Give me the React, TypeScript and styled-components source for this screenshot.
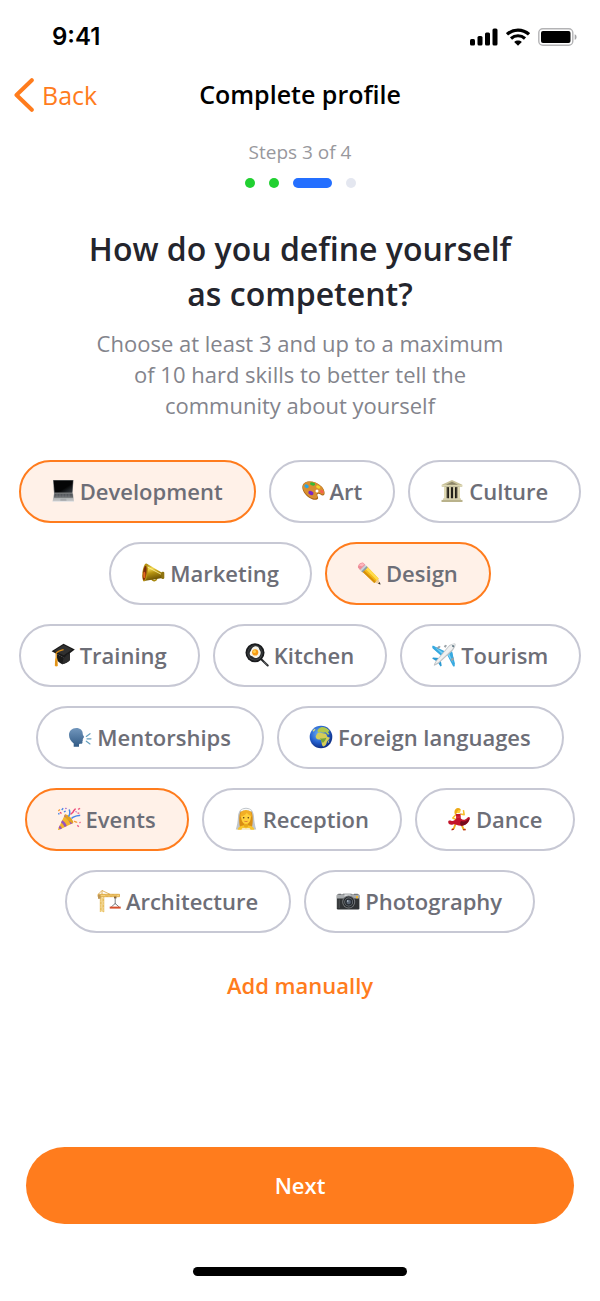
import React, { useState } from "react";
import styled, { createGlobalStyle } from "styled-components";

const GlobalStyle = createGlobalStyle`
  *, *::before, *::after { box-sizing: border-box; }
  body { margin: 0; background: #ffffff; }
  button { font-family: inherit; cursor: pointer; }
`;

const accent = "#ff7c1d";

const Screen = styled.div`
  display: flex;
  flex-direction: column;
  min-height: 100vh;
  background: #ffffff;
  font-family: "Open Sans", "Noto Sans", sans-serif;
`;

const StatusBar = styled.div`
  display: flex;
  align-items: center;
  justify-content: space-between;
  height: 74px;
  padding: 0 22px 0 52px;
`;

const Clock = styled.time`
  font-family: Inter, sans-serif;
  font-size: 24px;
  line-height: 32px;
  font-weight: 600;
  color: #000000;
`;

const StatusIcons = styled.div`
  display: flex;
  align-items: center;
  gap: 8px;
`;

const NavBar = styled.header`
  display: grid;
  grid-template-columns: 1fr auto 1fr;
  align-items: center;
  height: 42px;
  padding: 0 14px;
`;

const BackButton = styled.button`
  display: flex;
  align-items: center;
  justify-self: start;
  gap: 8px;
  padding: 0;
  border: 0;
  background: none;
  color: ${accent};
  font-size: 25px;
  line-height: 32px;
`;

const NavTitle = styled.h1`
  margin: 0;
  padding-bottom: 3px;
  font-size: 25px;
  line-height: 32px;
  font-weight: 600;
  color: #000000;
`;

const Content = styled.main`
  display: flex;
  flex: 1;
  flex-direction: column;
  align-items: center;
  padding: 22px 16px 0;
  text-align: center;
`;

const StepLabel = styled.p`
  margin: 0;
  font-size: 19px;
  line-height: 28px;
  color: #98989d;
`;

const StepDots = styled.div`
  display: flex;
  gap: 14px;
  margin-top: 12px;
`;

type StepState = "done" | "current" | "todo";
const stepColor = { done: "#21d031", current: "#246fff", todo: "#e4e7f0" };

const StepDot = styled.span<{ $state: StepState }>`
  width: ${(p) => (p.$state === "current" ? 39 : 10)}px;
  height: 10px;
  border-radius: 5px;
  background: ${(p) => stepColor[p.$state]};
`;

const Question = styled.h2`
  max-width: 440px;
  margin: 38px 0 0;
  font-size: 32px;
  line-height: 45px;
  font-weight: 600;
  color: #24252d;
`;

const Hint = styled.p`
  max-width: 424px;
  margin: 12px 0 0;
  font-size: 22px;
  line-height: 31px;
  color: #83848c;
`;

const Skills = styled.div`
  display: flex;
  flex-wrap: wrap;
  justify-content: center;
  gap: 19px 13px;
  margin-top: 39px;
`;

const Chip = styled.button<{ $selected: boolean }>`
  display: flex;
  align-items: center;
  gap: 5px;
  height: 63px;
  padding: 0 31px 2px 30px;
  border: 2px solid ${(p) => (p.$selected ? accent : "#c7c8d4")};
  border-radius: 32px;
  background: ${(p) => (p.$selected ? "#fff1e8" : "#ffffff")};
  color: #6d6e77;
  font-size: 22px;
  line-height: 32px;
  font-weight: 600;
`;

const Glyph = styled.svg`
  display: block;
  flex: none;
  width: 24px;
  height: 24px;
`;

const AddButton = styled.button`
  margin-top: 36px;
  padding: 0;
  border: 0;
  background: none;
  color: ${accent};
  font-size: 22px;
  line-height: 32px;
  font-weight: 600;
`;

const Footer = styled.footer`
  display: flex;
  flex-direction: column;
  align-items: center;
  gap: 43px;
  padding: 0 26px 25px;
`;

const NextButton = styled.button`
  width: 100%;
  height: 77px;
  padding: 0 0 2px;
  border: 0;
  border-radius: 39px;
  background: ${accent};
  color: #ffffff;
  font-size: 22px;
  line-height: 32px;
  font-weight: 600;
`;

const HomeIndicator = styled.div`
  width: 214px;
  height: 9px;
  border-radius: 5px;
  background: #000000;
`;

const drawings: Record<string, React.ReactNode> = {
  laptop: (
    <>
      <defs>
        <linearGradient id="lapScreen" x1="0" y1="0" x2="1" y2="1">
          <stop offset=".6" stopColor="#050506" />
          <stop offset="1" stopColor="#3c4248" />
        </linearGradient>
        <linearGradient id="lapBase" x1="0" y1="0" x2="0" y2="1">
          <stop offset="0" stopColor="#8d8f91" />
          <stop offset="1" stopColor="#c9cbcc" />
        </linearGradient>
      </defs>
      <path d="M2 1h20.500l-1 14H3z" fill="#77797b" />
      <path d="M2.600 1.500h19.300l-.8 12H3.600z" fill="url(#lapScreen)" />
      <path d="M3 14.500h19l1 7.800H1.600z" fill="url(#lapBase)" />
      <path d="M3.600 14.800h17.800l.7 3.600H3z" fill="#4b4e51" />
      <path d="M3.600 16.100h18M3.300 17.500h18.500M6 15v3.400M9 15v3.400M12 15v3.400M15 15v3.400M18 15v3.400" stroke="#8d9194" strokeWidth=".4" />
      <path d="M9.600 19.400h5.600l.3 2.400H9.300z" fill="#a7a9ab" />
      <path d="M1.600 22.200H23v.8H1.700z" fill="#e2e3e4" />
    </>
  ),
  palette: (
    <>
      <path d="M3.500 4C8 1 16 3 20.600 7.500c3.400 3.400 4 8.700 1.300 8.900-2 .1-3.700-2.600-5.200-1.300-1.500 1.200 1.800 3.800-.3 5.100C13 22.300 6.500 18.800 3 13.500.6 9.700.8 5.800 3.500 4z" fill="#a96514" />
      <path d="M3.900 3.700C8 1.300 15.800 3 20.200 7.400c3.300 3.300 3.700 7.900 1.600 8-2 .1-3.900-2.700-5.600-1.200-1.700 1.400 1.400 3.800-.4 4.900C12.700 21 6.700 17.700 3.500 12.800 1.200 9.300 1.500 5.200 3.900 3.700z" fill="#d98f30" />
      <ellipse cx="11.600" cy="5" rx="2.600" ry="1.600" fill="#35bb37" transform="rotate(12 11.600 5)" />
      <ellipse cx="5.600" cy="7.200" rx="2.300" ry="1.700" fill="#27a7e8" transform="rotate(30 5.600 7.200)" />
      <ellipse cx="17.200" cy="8" rx="2.200" ry="1.500" fill="#f4d429" transform="rotate(25 17.200 8)" />
      <ellipse cx="9.900" cy="14" rx="2.700" ry="2" fill="#7a28c2" transform="rotate(25 9.900 14)" />
      <ellipse cx="20.900" cy="12.700" rx="2" ry="1.500" fill="#f36150" transform="rotate(45 20.900 12.700)" />
      <circle cx="16" cy="12" r="1.500" fill="#fff" />
    </>
  ),
  museum: (
    <>
      <path d="M4.500 7.500h15v12h-15z" fill="#625c48" />
      <path d="M7.500 8.500h2v11h-2zM11 8.500h2v11h-2zM14.500 8.500h2v11h-2z" fill="#211f19" />
      <path d="M12 1 1.700 5.800v1.900h20.600V5.800z" fill="#c9c29a" />
      <path d="m12 2.800-6 2.900h12z" fill="#8e876a" />
      <path d="M4 8h2.500v12H4zM9.100 8h1.700v12H9.100zM13.200 8h1.700v12h-1.700zM17.500 8H20v12h-2.500z" fill="#e0dab4" />
      <path d="M3 19.400h18v1.500H3z" fill="#d5cea8" />
      <path d="M1.500 20.900h21V23h-21z" fill="#b9b28b" />
      <path d="M1.700 6.600h20.600" stroke="#eee8c6" strokeWidth=".6" />
    </>
  ),
  horn: (
    <>
      <defs>
        <linearGradient id="hornGold" x1="0" y1="0" x2=".25" y2="1">
          <stop offset="0" stopColor="#8f7208" />
          <stop offset=".35" stopColor="#f3d84d" />
          <stop offset=".6" stopColor="#b59210" />
          <stop offset="1" stopColor="#6b5203" />
        </linearGradient>
      </defs>
      <path d="M10.500 16.500c.4 3.700 4.700 4.400 5.200.5" fill="none" stroke="#a8880e" strokeWidth="1.600" />
      <path d="M5.500 2.600 21.500 12v5L3 20z" fill="url(#hornGold)" />
      <ellipse cx="4.100" cy="11.500" rx="2.700" ry="9" fill="#b8920f" transform="rotate(7 4.100 11.500)" />
      <ellipse cx="3.700" cy="12" rx="1.700" ry="7.300" fill="#7d2d0b" transform="rotate(7 3.700 12)" />
      <ellipse cx="3.300" cy="14" rx="1.100" ry="3.300" fill="#e2691d" />
      <rect x="20.300" y="10.700" width="3" height="7.300" rx="1.300" fill="#8f7411" />
      <path d="m6.500 6 13.500 7.200" stroke="#fff2a0" strokeWidth=".8" />
    </>
  ),
  pencil: (
    <>
      <path d="m17.600 21.600 5.700 1.800-2-5.600z" fill="#f0cd9c" />
      <path d="m21 22.700 2.600.9-.9-2.600z" fill="#2d2d2f" />
      <path d="M4.700 9.900 9.800 5.200 21.600 17.500l-4.300 4.400z" fill="#f5b916" />
      <path d="m9.800 5.200 11.800 12.300-1.700 1.800L7.800 7.200z" fill="#ffdc4e" />
      <path d="m4.900 10.300 1.500-1.600L18.800 20.400l-1.500 1.500z" fill="#d68f0c" />
      <path d="M4 10.100 9.200 4.800l1.500 1.600-5.200 5.200z" fill="#899ba8" />
      <path d="M2.600 8.800 7.900 3.500l1.700 1.700-5.300 5.300z" fill="#c8d3da" />
      <path d="M1 6.500C.3 4.400 3.900.7 6.200 1.700l2.100 2.100L3 9.100z" fill="#ee8d98" />
      <path d="M2 4.400C3.400 2.200 5.200 1.700 6.300 2.500l1 1-2.100 1.900z" fill="#ffb5bd" />
    </>
  ),
  cap: (
    <>
      <path d="m6 11 6.600 3.500 6.400-4.500v7c-2.200 2.700-6 4-7.800 4.200C8.800 20 7 18.800 6 17z" fill="#1a1a1a" />
      <path d="m12.600 14.500 6.400-4.500v7c-2.200 2.700-6 4-7.800 4.200z" fill="#2c2c2c" />
      <path d="M.6 8.200 12.500.8l11.300 5.700-10.900 8.200z" fill="#191919" />
      <path d="m3 8 9.600-6 8.600 4.500-8.500 5.800z" fill="#303030" />
      <path d="M12.600 6.600C9 7.500 6.300 8.600 5.200 10.200v7" fill="none" stroke="#d88b15" strokeWidth="1.300" />
      <path d="M4.200 15.500h2.200l.4 7.500c-1 .6-2.200.5-3 0z" fill="#f2a422" />
      <path d="M4.700 17.500v5M5.800 17.500v5" stroke="#bb710b" strokeWidth=".4" />
    </>
  ),
  pan: (
    <>
      <path d="m16.500 16.500 6.200 6" stroke="#25272a" strokeWidth="2" strokeLinecap="round" />
      <path d="m18.700 18.500 3.600 3.500" stroke="#85888a" strokeWidth=".7" />
      <circle cx="10" cy="9.800" r="9.500" fill="#191b1d" />
      <circle cx="10" cy="9.800" r="7.600" fill="#4a4d4f" />
      <circle cx="10" cy="9.800" r="7" fill="#292c2e" />
      <path d="M8 4.200c2.600-1.700 5.800-.7 6.300 2 .3 1.500 1.600 1.600 1.400 3.600-.2 2.600-1.900 5.300-5 5.300-2.100 0-2.400-1.300-4.100-2-2.300-1-2.300-3.300-1.100-4.800.8-1.100 1-3 2.500-4.100z" fill="#f6f4ea" />
      <circle cx="10.200" cy="9.400" r="3.100" fill="#f69b14" />
      <circle cx="9.500" cy="8.500" r="1.500" fill="#ffd04b" />
    </>
  ),
  plane: (
    <>
      <path d="m12.500 9-12-6.200L.4 4.600l8.600 8zM15 11.500l6.200 12 1.700-.3-3-14.700z" fill="#37a9e0" />
      <path d="M12.800 8.300.8 2.500l-.3 2.700 8.700 7.500zM15.500 11l6.200 11.700 1.200-2L20 8z" fill="#37a9e0" />
      <path d="m2.500 4 8.500 5.200-1.200 1.500zM21.500 20.500 17.200 10.500l-1.500 1.200z" fill="#78d0f5" />
      <path d="m7 15-6-.6-.8 1.200 4.700 3zM8.700 17l1 5.700-1.200.9L5.600 19z" fill="#299ad3" />
      <path d="m4.800 4.800 2.200-2.100 1.700 1-2.100 2.400zM19.600 18.200l2.600-2-.8-1.900-2.600 1.900zM11.800 3.700l1.200-1.900 2 .8-1.400 2.100z" fill="#9ba3a8" />
      <path d="M23.300.8c.9 1.500-1 5-2.700 6.900L7.800 19.500c-1.500 1.300-5 3.500-5.900 3.100-.5-.9 1.700-4.400 3.100-6L16.300 3.200C18.200 1.400 22 0 23.300.8z" fill="#bfc3c6" />
      <path d="M22.700 1.100c-1.400-.3-4.200 1.100-5.800 2.700L6 16.400c-1 1.200-2.400 3.300-3 4.600 1.600-.5 3.300-1.700 4.500-2.800L20 6.400c1.500-1.600 3-4.100 2.700-5.300z" fill="#f0f1f1" />
      <path d="m19.700 2.800 1.600 1.700.8-1.500-1-1z" fill="#486373" />
    </>
  ),
  speaking: (
    <>
      <defs>
        <linearGradient id="headBlue" x1="0" y1="0" x2="0" y2="1">
          <stop offset="0" stopColor="#7297bd" />
          <stop offset="1" stopColor="#315a85" />
        </linearGradient>
      </defs>
      <path d="M8.300 3c4 0 6.400 2.500 6.400 5.400 0 1 .3 1.500 1.200 3 .4.700.2 1.100-.5 1.400l-.4.200.3 1.100-.8.700.4.800-.5.700c.4 2-.2 2.500-1.800 2.500-1.200 0-1.600.3-1.600 1.200v1.700H5.700v-3.200C3 16.300 1 13.600 1 10.100 1 5.900 4 3 8.300 3z" fill="url(#headBlue)" />
      <path d="m18.300 11.400 3.700-2.700M19 13.800h4M18.300 16.200l3.700 2.700" stroke="#66a0bf" strokeWidth="1.200" strokeLinecap="round" />
    </>
  ),
  globe: (
    <>
      <defs>
        <radialGradient id="ocean" cx=".4" cy=".35" r=".65">
          <stop offset="0" stopColor="#6fb2f3" />
          <stop offset=".6" stopColor="#235fcd" />
          <stop offset="1" stopColor="#0f2f85" />
        </radialGradient>
      </defs>
      <circle cx="12" cy="12" r="11.300" fill="url(#ocean)" />
      <path d="M9 4.400c1.200-1.400 2.900-2.400 4-2.500 3 0 5.700 1.300 7.700 4l-1.800 1 1.600 2.200-1.500.6-2.400-2.400-2.900.5-2-1-2.300 1-1-1.800z" fill="#b3c84b" />
      <path d="M8.200 8.500c1.700-1.300 3.900-1.300 5.400-.3l3.400.6 1.500 3.300 2.300.4c-.1 2-2.800 3.300-3.100 5-.3 2-1.700 3.900-3.200 3.900-1.600-.2-1.700-2.900-2-4.900-.2-1.700-1-2.200-2.800-2.100-2 0-3.100-1.500-3-3.200z" fill="#d5cd58" />
      <path d="M11 13.200c2 .5 4.200.3 6.400-.4-.5 2-1.700 3-2.700 4.400-.8.800-2 .3-2.300-.7-.4-1-.5-1.900-1.400-3.300z" fill="#74a43b" />
      <path d="m19.400 15.700.9-.4-.7 2.400-.8.200zM3.500 5.700l2.200-2 .8 1-2 2z" fill="#d6d980" />
    </>
  ),
  party: (
    <>
      <path d="M8 7.500c4 1.500 7 5 8.200 8.600L1.900 22.900c-.8.200-1.100-.3-.8-1z" fill="#f4b52c" />
      <path d="M5.200 13.300c2 1 3.700 3 4.600 5.800l-2.300 1c-.8-2.200-2.100-3.800-3.500-4.500zM2.600 18.600c1.200.7 2 1.700 2.400 2.800l-2 .9c-.4-.7-.8-1.100-1.400-1.400zM7 9.300c3 1.700 5.300 4.400 6.500 8l2.500-1.200C14.300 12.200 12 9 8.100 7.400z" fill="#9653bd" />
      <path d="M7.800 7.600c1.600-.6 4.500 1.200 6.400 3.700 1.800 2.400 2.600 4.200 1.900 4.800-1.200.6-3.700-1.400-5.500-3.500-1.900-2.200-3.300-4.400-2.800-5z" fill="#e2a221" />
      <path d="M11.500 9.500c1.800-2.200 1.500-4.800.7-7M14.500 11.500c2.500-2.800 5-2.800 8.700-3.200" fill="none" stroke="#4988e9" strokeWidth="1.500" />
      <path d="M14 7.500c.3-2 1.900-1.400 2.300-3s1.900-1.200 2-3M4.500 6.500 3 5.200" fill="none" stroke="#ed4675" strokeWidth="1.400" />
      <path d="M17 14.500c1.400-.5 1.800 1 3.200.6M3 2.500 1.300 4" fill="none" stroke="#f59b37" strokeWidth="1.400" />
      <path d="M6.200 1.300 4.700 3M8.700 4.200l-1.800.7M1.200 7l1.300-.5" stroke="#4988e9" strokeWidth="1.400" />
      <path d="m21 2.300 2.100-.9M20.500 5.800l1.800.6M20.300 18.300l1.500 1.500M22.600 15l.8 1" stroke="#ee5f85" strokeWidth="1.400" />
      <path d="m8.500 1 .9.900M18.700 5.100l.8-.7" stroke="#9b4ec4" strokeWidth="1.300" />
    </>
  ),
  bride: (
    <>
      <path d="M12 .8c5.300 0 7.700 3.800 8 9 .2 4.500 1 9 2.200 12.700H1.800C3 18.800 3.800 14.300 4 9.800c.3-5.200 2.700-9 8-9z" fill="#bfc5ca" />
      <path d="M6 20c-1.200-5-1.200-14 1.300-16.300C9 2 15 2 16.700 3.700 19.200 6 19.200 15 18 20z" fill="#d98e13" />
      <path d="M3.600 22.800c.5-3.200 4-4.200 6.200-4.600h4.400c2.200.4 5.700 1.400 6.200 4.600z" fill="#f8c52d" />
      <path d="M10 15h4v4.500c-1 1.300-3 1.300-4 0z" fill="#e8a91a" />
      <path d="M7 8.500C7 5.500 9 4.200 12 4.200s5 1.300 5 4.300c0 5.200-2 8.500-5 8.500S7 13.700 7 8.500z" fill="#ffd03d" />
      <path d="M6.300 10c1.500-1 5.600-1.900 6.500-4.600 1 2.300 3.500 2.600 5 4.600C18 5.500 16 3 12 3s-6 2.500-5.700 7z" fill="#f2ae25" />
      <circle cx="9.700" cy="10.800" r=".8" fill="#553516" />
      <circle cx="14.300" cy="10.800" r=".8" fill="#553516" />
      <path d="M10.200 13.700c1.200.8 2.400.8 3.600 0-.4 1.600-3.200 1.600-3.600 0z" fill="#c54332" />
      <path d="M7 4.300c1.600-2.500 8.400-2.500 10 0" fill="none" stroke="#f8fafb" strokeWidth="1.200" />
      <path d="M7.500 22.800c.2-2 2-1.400 4.500-1.400s4.300-.6 4.500 1.400z" fill="#f8f9fa" />
    </>
  ),
  dancer: (
    <>
      <path d="m8.500 17-1.700 4.500-1.800.8M14.500 17.500l2 4.700 1.900.2" fill="none" stroke="#efad1f" strokeWidth="1.900" strokeLinejoin="round" />
      <path d="m4.500 22.900 2.400-1M16 22.800h2.800" stroke="#a80f1c" strokeWidth="1.100" />
      <path d="m13.500 7 3.700.7-.8-4.500M9 7.500 5.800 11l3.300 1.500" fill="none" stroke="#f7bd29" strokeWidth="1.500" strokeLinejoin="round" />
      <path d="M8.700 6.500c1.500.7 3.300.7 4.800 0l.3 5c2 1.800 4.200 2 6.500-.7 1.500-1.300 2.700-.6 2.500.7-.5 3.300-3.500 7-8.300 7.200-4.500.2-6-2-8.500-1.200-2.600.8-5-.4-4.800-2.800.2-1.600 1.800-1.300 3-.9 2 .7 3.600-.4 5-2.300z" fill="#c3142a" />
      <path d="M14 14c3.500 1.300 5.900-.1 8.500-3-.2 3.700-3.600 7.600-8.200 7.700-1.500-.7-1.500-3.500-.3-4.700z" fill="#750a1b" />
      <path d="M9 9.500c1.300.9 2.700.9 4.400.2" stroke="#ee3c4c" fill="none" strokeWidth=".8" />
      <circle cx="11.200" cy="3.900" r="2.300" fill="#ffcf3c" />
      <path d="M7.900 7.300c-1-2.500-.2-6.200 3-6.300 2 0 3 1 2.900 2.500-1.500-.6-2.600-.6-3.600 1.200-.2 1.500-1 2.500-2.300 2.600z" fill="#edaa18" />
    </>
  ),
  crane: (
    <>
      <path d="M3.300 5h3.500v18H3.300z" fill="#f9e8bb" />
      <path d="M3.300 5v18M6.800 5v18M3.300 8l3.500 3-3.500 3 3.500 3-3.500 3 3.500 3M3.300 11h3.500M3.300 14h3.500M3.300 17h3.500M3.300 20h3.500" fill="none" stroke="#e4b64b" strokeWidth=".8" />
      <path d="M1 5.300h21.500v2.400H1z" fill="#f5d27a" />
      <path d="M1 5.300h21.500v2.400H1zM5 1.500v4M5 1.500l8 3.800M5 1.500 1.500 5M8 5.500l2 2 2-2 2 2 2-2 2 2 2-2" fill="none" stroke="#d8a13a" strokeWidth=".8" />
      <path d="M1 5.800h2.600v4H1z" fill="#bf9655" />
      <path d="M18.200 7.700v7.600M18.200 14.500l-4 3.500M18.200 14.500l4 3.500" fill="none" stroke="#5c6065" strokeWidth=".8" />
      <path d="M12.700 17.600h11v2h-11z" fill="#d5502e" />
      <path d="M17 7.700h2.500v1.700H17z" fill="#85643b" />
    </>
  ),
  camera: (
    <>
      <path d="M7 4.600h8.500l1.200 2.700H6z" fill="#a7aaac" />
      <rect x=".8" y="5.500" width="22.600" height="15" rx="1.200" fill="#303234" />
      <path d="M.8 6.500c0-.7.500-1 1.200-1h20.200c.7 0 1.200.3 1.200 1v3H.8z" fill="#a8abad" />
      <path d="M2.300 4.700h2.800v1.200H2.300zM18 4.700h3.800v1.200H18z" fill="#737679" />
      <path d="M8.500 5.300h6v2.500h-6z" fill="#d7d9da" />
      <circle cx="12.700" cy="13" r="6.500" fill="#737679" />
      <circle cx="12.700" cy="13" r="5.500" fill="#242629" />
      <circle cx="12.700" cy="13" r="4.400" fill="#7b8085" />
      <circle cx="12.700" cy="13" r="3.700" fill="#292d33" />
      <circle cx="12.700" cy="13" r="2.200" fill="#596371" />
      <circle cx="11.700" cy="12" r=".8" fill="#cbd5df" />
      <path d="M20 7h2v2.200h-2z" fill="#efb631" />
      <path d="M2 10.500v8.500M3.500 10.500v8.500" stroke="#56595c" strokeWidth=".6" />
    </>
  ),
};

const skills = [
  { name: "Development", icon: "laptop" },
  { name: "Art", icon: "palette" },
  { name: "Culture", icon: "museum" },
  { name: "Marketing", icon: "horn" },
  { name: "Design", icon: "pencil" },
  { name: "Training", icon: "cap" },
  { name: "Kitchen", icon: "pan" },
  { name: "Tourism", icon: "plane" },
  { name: "Mentorships", icon: "speaking" },
  { name: "Foreign languages", icon: "globe" },
  { name: "Events", icon: "party" },
  { name: "Reception", icon: "bride" },
  { name: "Dance", icon: "dancer" },
  { name: "Architecture", icon: "crane" },
  { name: "Photography", icon: "camera" },
];

const steps: StepState[] = ["done", "done", "current", "todo"];

export default function App() {
  const [selected, setSelected] = useState(["Development", "Design", "Events"]);

  const toggle = (name: string) =>
    setSelected((list) =>
      list.includes(name) ? list.filter((n) => n !== name) : [...list, name]
    );

  return (
    <Screen>
      <GlobalStyle />
      <StatusBar>
        <Clock>9:41</Clock>
        <StatusIcons>
          <svg width="28" height="18" viewBox="0 0 28 18" aria-hidden="true">
            <rect x="0" y="11" width="5" height="6.500" rx="1.500" />
            <rect x="7.500" y="8" width="5" height="9.500" rx="1.500" />
            <rect x="15" y="4.500" width="5" height="13" rx="1.500" />
            <rect x="22.500" y="0.500" width="5" height="17" rx="1.500" />
          </svg>
          <svg width="24" height="18" viewBox="0 0 24 18" aria-hidden="true">
            <path d="M1 6.300C7.200.6 16.800.6 23 6.300" fill="none" stroke="#000" strokeWidth="3.200" />
            <path d="M5 10.500c4-3.600 10-3.600 14 0" fill="none" stroke="#000" strokeWidth="3.100" />
            <path d="M12 17.700 8.200 13.900c2.200-1.900 5.400-1.900 7.600 0z" />
          </svg>
          <svg width="40" height="18" viewBox="0 0 40 18" aria-hidden="true">
            <rect x=".8" y=".8" width="34" height="16.400" rx="4" fill="none" stroke="#b3b3b5" strokeWidth="1.400" />
            <rect x="3" y="3" width="29.500" height="12" rx="2" />
            <path d="M36.700 6.200c2.500.7 2.500 4.900 0 5.600z" fill="#a6a6a8" />
          </svg>
        </StatusIcons>
      </StatusBar>
      <NavBar>
        <BackButton type="button">
          <svg width="20" height="34" viewBox="0 0 20 34" aria-hidden="true">
            <path d="M17.800 2.200 2.500 17l15.300 14.800" fill="none" stroke={accent} strokeWidth="4" strokeLinecap="round" strokeLinejoin="round" />
          </svg>
          Back
        </BackButton>
        <NavTitle>Complete profile</NavTitle>
      </NavBar>
      <Content>
        <StepLabel>Steps 3 of 4</StepLabel>
        <StepDots aria-hidden="true">
          {steps.map((state, i) => (
            <StepDot key={i} $state={state} />
          ))}
        </StepDots>
        <Question>How do you define yourself as competent?</Question>
        <Hint>
          Choose at least 3 and up to a maximum of 10 hard skills to better tell the community
          about yourself
        </Hint>
        <Skills>
          {skills.map(({ name, icon }) => (
            <Chip
              key={name}
              type="button"
              $selected={selected.includes(name)}
              aria-pressed={selected.includes(name)}
              onClick={() => toggle(name)}
            >
              <Glyph viewBox="0 0 24 24" aria-hidden="true">
                {drawings[icon]}
              </Glyph>
              {name}
            </Chip>
          ))}
        </Skills>
        <AddButton type="button">Add manually</AddButton>
      </Content>
      <Footer>
        <NextButton type="button">Next</NextButton>
        <HomeIndicator />
      </Footer>
    </Screen>
  );
}
